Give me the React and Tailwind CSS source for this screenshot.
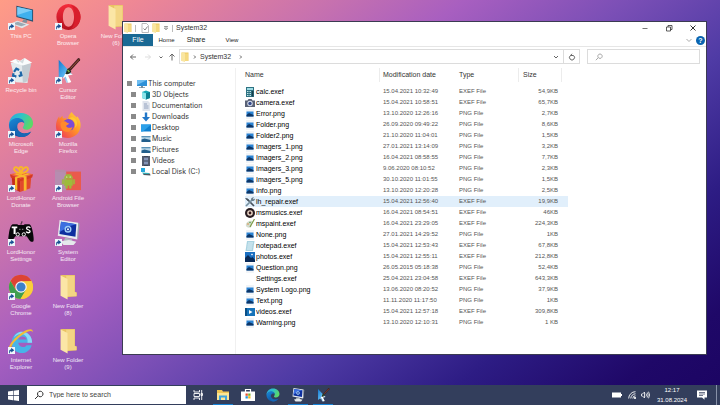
import { useState } from 'react'

/* ---------- Desktop icons (28x28 grid) ---------- */

function Folder({ className }) {
  return (
    <svg viewBox="0 0 28 28" className={className}>
      <path d="M6 1.500l1-.5h14.500v18l2 1v4l-11.500 1z" fill="#e9c363" />
      <path d="M12 2h9v17.500l2 .5v4H12z" fill="#f3d584" />
      <path d="M6 1.500l7.500 4v22L6 23.500z" fill="#fbe6a6" />
    </svg>
  )
}

function ThisPC({ className }) {
  return (
    <svg viewBox="0 0 28 28" className={className}>
      <path d="M9 2l18 4v13L9 14z" fill="#27506f" />
      <path d="M10 3.200l16 3.600v10.800L10 13.200z" fill="#3fb0ee" />
      <path d="M10 3.200l16 3.600-16 5z" fill="#7dcdf7" />
      <path d="M17 16.500l4 1-1 3-5-1z" fill="#7f8f9c" />
      <path d="M3 21l7-3 13 4-8 4z" fill="#dfe6ea" />
      <path d="M5 21.200l5.500-2 9 2.800-5 2z" fill="#9aa9b3" />
    </svg>
  )
}

function RecycleBin({ className }) {
  return (
    <svg viewBox="0 0 28 28" className={className}>
      <path d="M3 5l21 1-3 21-13-1z" fill="#e3e9ec" />
      <path d="M15 7l10-1-4 19-5 2z" fill="#c3ccd2" />
      <path d="M2 4l6-3 5 2 5-3 8 5-10 3z" fill="#fafcfc" />
      <path d="M8 1l3 4 7-5-2 6z" fill="#d4dcdf" />
      <g fill="none" stroke="#1d67a8" strokeWidth="2.400">
        <path d="M6.500 15l2.500-3.500 3 1.500" />
        <path d="M13.500 14.500l1 4-3 1" />
        <path d="M9 20l-3.500-1 .5-2.500" />
      </g>
    </svg>
  )
}

function Edge({ className }) {
  return (
    <svg viewBox="0 0 28 28" className={className}>
      <defs>
        <linearGradient id="edgeTop" x1="0" y1="0" x2="1" y2=".4">
          <stop offset="0" stopColor="#2aa4e0" />
          <stop offset=".5" stopColor="#2fc3c8" />
          <stop offset="1" stopColor="#5bd868" />
        </linearGradient>
        <linearGradient id="edgeSide" x1="0" y1="0" x2=".7" y2="1">
          <stop offset="0" stopColor="#1b8bd8" />
          <stop offset="1" stopColor="#0b4c9c" />
        </linearGradient>
      </defs>
      <path d="M1 14C1 6 7 1 14 1c8 0 13 5.500 13 11 0 4.500-3.500 7-7 7-3 0-4.500-1.200-4-2.500 1-1.500 1.500-2.500 1.500-4 0-3-3-5-7-5-5 0-8.500 2.500-9.500 6.500z" fill="url(#edgeTop)" />
      <path d="M1 14c.5-5 5-7.500 9-7.500 4.500 0 7.500 2.800 7.500 5.500-2-2-6.500-1.500-7.500 2.500-1 5 4 9.500 9.500 8.500 2-.3 4-1 5.500-2C22.500 25 18.500 27 14 27 6.500 27 1 21 1 14z" fill="url(#edgeSide)" />
      <path d="M10 14.500C8.500 20 14 24 19.500 23c2-.3 4-1 5.500-2-3 5-7.500 6.500-11.500 5.800C8 25.500 6 18.500 10 14.500z" fill="#1767b5" />
    </svg>
  )
}

function Gift({ className }) {
  return (
    <svg viewBox="0 0 28 28" className={className}>
      <path d="M4 12l9 3v13l-8-4z" fill="#c62d1c" />
      <path d="M13 15l12-3-1 12-11 4z" fill="#e2492c" />
      <path d="M2 9l12-2.500L27 9l-13.500 4.500z" fill="#f0623c" />
      <path d="M2 9l11.500 4.500v3L3 12.500zM27 9l-13.500 4.500v3L26 12.500z" fill="#d63a22" />
      <path d="M6 8.500l3-.7 11 3.500V26l-3 1V12.500zM21 7.800l3 .7-14 4.800V26l-2.500-1V12z" fill="#f8b82e" />
      <g fill="none" stroke="#f9b52a" strokeWidth="2">
        <path d="M14 8C9 7 5 4.500 7 2s6 2 7 6z" />
        <path d="M14 8c5-1 9-3.500 7-6s-6 2-7 6z" />
        <path d="M14 8c-2-4-2.500-7 0-7s2 3 0 7z" />
      </g>
    </svg>
  )
}

function Gamepad({ className }) {
  return (
    <svg viewBox="0 0 28 28" className={className}>
      <path d="M14 5c0-2 1-1.500 1-3.500" stroke="#111" strokeWidth="1" fill="none" />
      <path d="M5 4.500h5l1 1h6l1-1h5c2 1 3 4 4 10 1 7 1 9-1 9-3 0-4-4-6-6H8c-2 2-3 6-6 6-2 0-2-3-1-9 1-6 2-9 4-10z" fill="#08080a" />
      <path d="M4 7h6v2H8.200v6H6V9H4z" fill="#fff" />
      <path d="M24 8.500c-1-1.500-4-1.300-4 .4 0 2 3.800 1.200 3.800 3.300 0 2-3.300 2-4.300.3" stroke="#fff" strokeWidth="1.400" fill="none" />
      <circle cx="10.500" cy="15.500" r="1.800" stroke="#fff" fill="none" />
      <circle cx="17" cy="15.500" r="1.800" stroke="#fff" fill="none" />
      <path d="M12 10h1.500M15 10h1.500" stroke="#aaa" />
    </svg>
  )
}

function Chrome({ className }) {
  return (
    <svg viewBox="0 0 28 28" className={className}>
      <circle cx="14" cy="14" r="13" fill="#f7cb33" />
      <path d="M2.700 7.500A13 13 0 0 1 25.300 7.500L14 8l-5.600 9.200z" fill="#dd4335" />
      <path d="M2.700 7.500A13 13 0 0 0 13.500 27l6-10-11.100.2z" fill="#3f9f4f" />
      <path d="M14 8h11.500A13 13 0 0 1 13.500 27l6-10z" fill="#f9cf3b" />
      <circle cx="14" cy="14" r="6.200" fill="#f4f6f7" />
      <circle cx="14" cy="14" r="4.900" fill="#3c80c9" />
    </svg>
  )
}

function Explorer({ className }) {
  return (
    <svg viewBox="0 0 28 28" className={className}>
      <path d="M15 4c6.500 0 11 5 11 12H11c.5 5 7 6 9 2.500h5.500C24 24 19.500 27 15 27 8.500 27 4 22 4 15.500S9 4 15 4zm-4 8.500h9c-.5-4.500-8-4.500-9 0z" fill="#47b4e8" />
      <path d="M15 4c6.500 0 11 5 11 12h-5c1-6-3-9.500-7-9.500-3 0-5.500 1.500-7.500 4C7.500 6.500 11 4 15 4z" fill="#8bd8f6" />
      <path d="M1 24C-1 18 12 5 21 2c4-1.300 6-.5 5.500 2.500-1-1.800-3-1.600-6-.2C13 8 3 17 3 23z" fill="#f2bc37" />
    </svg>
  )
}

function Opera({ className }) {
  return (
    <svg viewBox="0 0 28 28" className={className}>
      <defs>
        <linearGradient id="opera" x1="0" y1="0" x2="0" y2="1">
          <stop offset="0" stopColor="#f52b3a" />
          <stop offset="1" stopColor="#b5111f" />
        </linearGradient>
      </defs>
      <path fillRule="evenodd" d="M14.500 0a13 14 0 1 0 .01 0zM14.500 3.500c3.600 0 6 4.500 6 10.500s-2.400 10.500-6 10.500-6-4.500-6-10.500 2.400-10.500 6-10.500z" fill="url(#opera)" />
      <path d="M17 1c6.500 1.500 10.500 6.500 10.500 13S23.500 25.500 17 27c3-2.500 4.500-7 4.500-13S20 3.500 17 1z" fill="#d81f2d" />
    </svg>
  )
}

function CursorEditor({ className }) {
  return (
    <svg viewBox="0 0 28 28" className={className}>
      <defs>
        <linearGradient id="cursor" x1="0" y1="0" x2="1" y2="1">
          <stop offset="0" stopColor="#1276cf" />
          <stop offset=".5" stopColor="#55b2ee" />
          <stop offset="1" stopColor="#fff" />
        </linearGradient>
      </defs>
      <path d="M4 2l15 16-6 .5 3 7-3.500 1.500-3-7L4 24z" fill="url(#cursor)" />
      <path d="M12 15l7 3-5 .8 3.500 7-3 1.200-3-7-3.500 3z" fill="#fff" />
      <path d="M25 0c1.500 0 2.500 1 2 2.500l-10 11-2.500-2z" fill="#432021" />
      <path d="M26 1.500l-9.500 10" stroke="#a55436" strokeWidth="1" />
      <path d="M14.500 11l3 3c0 3-4.500 4-6.500 3 1.500-1 1-5 3.500-6z" fill="#202b22" />
      <path d="M13.500 13l2 2" stroke="#78b341" strokeWidth="1.500" />
    </svg>
  )
}

function Firefox({ className }) {
  return (
    <svg viewBox="0 0 28 28" className={className}>
      <defs>
        <linearGradient id="fox" x1="1" y1="0" x2="0" y2="1">
          <stop offset="0" stopColor="#ffe23d" />
          <stop offset=".45" stopColor="#ff9328" />
          <stop offset="1" stopColor="#ee2763" />
        </linearGradient>
      </defs>
      <path d="M18 0c1 2.500 4 4 5.500 6l.5-1.500c3 4 4 7.500 3.500 11.500C26.500 23 21 28 14 28 6.500 28 1 22.500 1 15c0-4 1.500-8 3.500-10.500L5 7l3-3 .5 3c2-.5 4 0 5.500.8C14 4 16 2 18 0z" fill="url(#fox)" />
      <circle cx="14.500" cy="14" r="6.500" fill="#7b4bd6" />
      <path d="M6 12c2-2.500 5-2.500 7-.5l2 .5c0 1.600-2.500 1.800-3 3 .5 2 4 3 7 .8-1 4.500-4 6-7 5.500S5.500 18 6 12z" fill="#ff8a2a" />
      <path d="M15 7c5 1 8 5 6.500 10 3-2 3-7 .5-9.500s-4.500-2-7-.5z" fill="#ffc933" />
    </svg>
  )
}

function AndroidFiles({ className }) {
  return (
    <svg viewBox="0 0 28 28" className={className}>
      <path d="M0 4h10l2 2h16v20H0z" fill="#b78aa9" />
      <path d="M12 6h16v20H12z" fill="#ea5a4c" />
      <path d="M0 6l12 1v19H0z" fill="#b58fb4" opacity=".7" />
      <path d="M10 13.500a4.500 4.500 0 0 1 9 0zM10 14.500h9v6.500h-1.500v3h-2v-3h-2v3h-2v-3H10zM7.800 14.500h1.500v5H7.800zM19.700 14.500h1.500v5h-1.500zM11 8l1.500 2M18 8l-1.500 2" fill="#9dbb3b" stroke="#9dbb3b" strokeWidth=".5" />
      <circle cx="12.700" cy="11.800" r=".6" fill="#fff" />
      <circle cx="16.300" cy="11.800" r=".6" fill="#fff" />
    </svg>
  )
}

function SystemEditor({ className }) {
  return (
    <svg viewBox="0 0 28 28" className={className}>
      <path d="M5 0l20 3-1 18L3 17z" fill="#e8ecef" />
      <path d="M25 3l1.500 1L25 20l-1 1z" fill="#9ba5b0" />
      <path d="M6.500 2L23 4.500 22 18 4.800 15z" fill="#0d2f9f" />
      <path d="M6.500 2L23 4.500l-7 2L5 13z" fill="#3d6fe0" />
      <circle cx="14" cy="10" r="3" fill="none" stroke="#9fcdf5" strokeWidth="1.600" />
      <circle cx="14" cy="10" r="1.200" fill="#e9f5fd" />
      <path d="M11 19l7 1.500 1 3H9z" fill="#aeb6be" />
      <path d="M6 23l9-1.500 8 2-3 3.500H9z" fill="#e5e9ec" />
    </svg>
  )
}

function Shortcut() {
  return (
    <svg viewBox="0 0 7 7" className="absolute bottom-0 left-0 size-[7px]">
      <path d="M0 0h7v7H0z" fill="#eef5fb" />
      <path d="M1.200 6.200V4.200C1.200 3 2 2.400 3.200 2.400V.8L6.300 3.200 3.200 5.500V4c-1 0-1.200.8-1.200 2.200z" fill="#174f92" />
    </svg>
  )
}

/* ---------- Small icons (10x10 grid) ---------- */

function PngIcon() {
  return (
    <svg viewBox="0 0 10 10" className="size-[10px]">
      <path d="M1 0h8v10H1z" fill="#f1f4f7" />
      <path d="M1.500 2.500h7v5h-7z" fill="#2a83d3" />
      <path d="M1.500 7.500V6l2.500-2 4.500 2v1.500z" fill="#0c3566" />
    </svg>
  )
}

const SMALL = {
  calc: (
    <>
      <path d="M1 0h8v10H1z" fill="#2e7282" />
      <path d="M2 1h6v2H2z" fill="#9edbe4" />
      <path d="M2 4.500h4M2 6.500h4M2 8.500h4" stroke="#c2e4e8" strokeDasharray="1 .5" />
      <path d="M6.800 4h1.500v5.500H6.800z" fill="#193f4a" />
    </>
  ),
  camera: (
    <>
      <path d="M0 2.500h2.500L3.500 1h3l1 1.500H10V9H0z" fill="#5a6276" />
      <circle cx="5" cy="5.500" r="2.700" fill="#d7dfef" />
      <circle cx="5" cy="5.500" r="1.700" fill="#374b8a" />
    </>
  ),
  repair: (
    <>
      <path d="M2 2l7 7" stroke="#47525c" strokeWidth="1.700" />
      <path d="M0 1l2 .2L4 3 3 4 1.200 2.500z" fill="#47525c" />
      <path d="M8 2L1 9" stroke="#77909f" strokeWidth="1.700" />
      <path d="M6 2.500C6 1 7.500 0 9 .3L8 1.500l.7.900L10 1.500c.3 1.500-1.500 3-3 2.500z" fill="#687d8b" />
    </>
  ),
  music: (
    <>
      <circle cx="5" cy="5" r="5" fill="#291e22" />
      <circle cx="5" cy="5" r="2.800" fill="#f0dccb" />
      <circle cx="5" cy="5" r="1.400" fill="#34191c" />
    </>
  ),
  paint: (
    <>
      <path d="M1 7c-1-3 3-6 6-5 2 1 1 2 0 3s0 2-1 3-4 1-5-1z" fill="#d4dccf" />
      <circle cx="3" cy="5" r=".8" fill="#d98c3b" />
      <circle cx="5" cy="3.500" r=".8" fill="#58a24d" />
      <path d="M9.500 0L5 8" stroke="#7d9c46" strokeWidth="1.200" />
    </>
  ),
  notepad: (
    <>
      <path d="M2 0h7.500L8 10H.5z" fill="#a9d3e1" />
      <path d="M3 2h5M2.500 4h5M2.300 6h5M2 8h5" stroke="#edf8fb" strokeWidth=".8" />
    </>
  ),
  photos: (
    <>
      <path d="M0 0h10v10H0z" fill="#1b6fc1" />
      <path d="M0 10V6l3-3 3 3 1.500-1L10 8v2z" fill="#092a57" />
      <path d="M7 1.500l1 1-1 1-1-1z" fill="#fff" />
    </>
  ),
  videos: (
    <>
      <path d="M0 1h10v8H0z" fill="#1673b9" />
      <path d="M0 1h2v8H0z" fill="#0b4f87" />
      <path d="M4 3l3.500 2L4 7z" fill="#fff" />
    </>
  ),
  computer: (
    <>
      <path d="M0 1h10v6H0z" fill="#2f91d8" />
      <path d="M0 1h10L0 6z" fill="#6fbdf0" />
      <path d="M4 7h2v1.200h2V9H2v-.8h2z" fill="#778f9f" />
    </>
  ),
  objects: (
    <>
      <path d="M1 2l4-1.500L9 2v6L5 9.500 1 8z" fill="#16a7b5" />
      <path d="M1 2l4 1.200v6.300L1 8z" fill="#8ae4ea" />
      <path d="M5 3.200L9 2v6L5 9.500z" fill="#0d7f91" />
    </>
  ),
  docs: (
    <>
      <path d="M1.500 0h5.500l2 2v8H1.500z" fill="#dfe4ed" />
      <path d="M3 3h3M3 5h4.500M3 7h4.500" stroke="#8293b4" strokeWidth=".8" />
    </>
  ),
  downloads: <path d="M3.800.5h2.400v4.500H9L5 9.500 1 5h2.800z" fill="#2277c8" />,
  desktop: (
    <>
      <path d="M0 1.500h10v7H0z" fill="#1080d0" />
      <path d="M0 1.500h10L2 8.500H0z" fill="#2ca1ea" />
    </>
  ),
  picture: (
    <>
      <path d="M.5 2h9v6h-9z" fill="#b9d7e8" />
      <path d="M.5 2h9v1.300h-9z" fill="#5b93b7" />
      <path d="M.5 8V5.500l3-1 6 1.500v2z" fill="#235f8b" />
    </>
  ),
  film: (
    <>
      <path d="M1 0h8v10H1z" fill="#3d4457" />
      <path d="M3 1.500h4v3H3zM3 5.500h4v3H3z" fill="#8493b5" />
      <path d="M2 .5v9M8 .5v9" stroke="#c7cbd6" strokeWidth=".7" strokeDasharray="1 1" />
    </>
  ),
  disk: (
    <>
      <path d="M0 1h4v4H0z" fill="#26a7dc" />
      <path d="M2 6l7 .5.5 2-7-.5z" fill="#4a5961" />
      <path d="M1 5.500l7 .5v1L2 6.800z" fill="#2fb5bf" />
    </>
  ),
}

function SmallIcon({ name }) {
  if (name === 'none') return <span className="block size-[10px]" />
  if (name === 'png') return <PngIcon />
  return <svg viewBox="0 0 10 10" className="size-[10px]">{SMALL[name]}</svg>
}

function TinyFolder() {
  return (
    <svg viewBox="0 0 8 10" className="h-[10px] w-2 shrink-0">
      <path d="M.5.5h7v8.500h-7z" fill="#eec95e" />
      <path d="M.5.5l3.500.8V10L.5 9z" fill="#fae6a0" />
      <path d="M4 1.500h3V9H4z" fill="#f5d980" />
    </svg>
  )
}

function Line({ d, className = 'size-2', width = 1 }) {
  return (
    <svg viewBox="0 0 8 8" className={className} fill="none" stroke="currentColor" strokeWidth={width}>
      <path d={d} />
    </svg>
  )
}

/* ---------- Data ---------- */

const DESKTOP = [
  { icon: ThisPC, label: ['This PC'] },
  { icon: RecycleBin, label: ['Recycle bin'] },
  { icon: Edge, label: ['Microsoft', 'Edge'] },
  { icon: Gift, label: ['LordHonor', 'Donate'] },
  { icon: Gamepad, label: ['LordHonor', 'Settings'] },
  { icon: Chrome, label: ['Google', 'Chrome'] },
  { icon: Explorer, label: ['Internet', 'Explorer'] },
  { icon: Opera, label: ['Opera', 'Browser'] },
  { icon: CursorEditor, label: ['Cursor', 'Editor'] },
  { icon: Firefox, label: ['Mozilla', 'Firefox'] },
  { icon: AndroidFiles, label: ['Android File', 'Browser'] },
  { icon: SystemEditor, label: ['System', 'Editor'] },
  { icon: Folder, label: ['New Folder', '(8)'], folder: true },
  { icon: Folder, label: ['New Folder', '(9)'], folder: true },
  { icon: Folder, label: ['New Folder', '(6)'], folder: true },
]

const TREE = [
  ['objects', '3D Objects'],
  ['docs', 'Documentation'],
  ['downloads', 'Downloads'],
  ['desktop', 'Desktop'],
  ['picture', 'Music'],
  ['picture', 'Pictures'],
  ['film', 'Videos'],
  ['disk', 'Local Disk (C:)'],
]

const FILES = [
  ['calc', 'calc.exef', '15.04.2021 10:32:49', '54,9KB'],
  ['camera', 'camera.exef', '15.04.2021 10:58:51', '65,7KB'],
  ['png', 'Error.png', '13.10.2020 12:26:16', '2,7KB'],
  ['png', 'Folder.png', '26.09.2020 09:49:22', '8,6KB'],
  ['png', 'Folder2.png', '21.10.2020 11:04:01', '1,5KB'],
  ['png', 'Imagers_1.png', '27.01.2021 13:14:09', '3,2KB'],
  ['png', 'Imagers_2.png', '16.04.2021 08:58:55', '7,7KB'],
  ['png', 'Imagers_3.png', '9.06.2020 08:10:52', '2,3KB'],
  ['png', 'Imagers_5.png', '30.10.2020 11:01:55', '1,5KB'],
  ['png', 'Info.png', '13.10.2020 12:20:28', '2,5KB'],
  ['repair', 'lh_repair.exef', '15.04.2021 12:56:40', '19,9KB'],
  ['music', 'msmusics.exef', '16.04.2021 08:54:51', '46KB'],
  ['paint', 'mspaint.exef', '16.04.2021 23:29:05', '224,3KB'],
  ['png', 'None.png', '27.01.2021 14:29:52', '1KB'],
  ['notepad', 'notepad.exef', '15.04.2021 12:53:43', '67,8KB'],
  ['photos', 'photos.exef', '15.04.2021 12:55:11', '212,8KB'],
  ['png', 'Question.png', '26.05.2015 05:18:38', '52,4KB'],
  ['none', 'Settings.exef', '25.04.2021 23:04:58', '643,3KB'],
  ['png', 'System Logo.png', '13.06.2020 08:20:52', '37,9KB'],
  ['png', 'Text.png', '11.11.2020 11:17:50', '1KB'],
  ['videos', 'videos.exef', '15.04.2021 12:57:18', '309,8KB'],
  ['png', 'Warning.png', '13.10.2020 12:10:31', '1 KB'],
]

/* ---------- Explorer window ---------- */

function TitleBar() {
  return (
    <div className="flex h-3 items-center text-[#333]">
      <div className="flex flex-1 items-center gap-[3px] pl-px">
        <TinyFolder />
        <span className="mr-0.5 h-[7px] w-px bg-[#bbb]" />
        <button aria-label="Properties">
          <svg viewBox="0 0 8 10" className="h-[10px] w-2">
            <path d="M1 .5h4.500l2 2v7H1z" fill="#fff" stroke="#aaa" strokeWidth=".8" />
            <path d="M2.500 5.500L4 7 6.500 3.500" fill="none" stroke="#888" />
          </svg>
        </button>
        <button aria-label="New folder"><TinyFolder /></button>
        <button aria-label="Customize toolbar" className="text-[#777]">
          <Line d="M1.500 2h5M1.800 4h4.400L4 6.500z" className="size-1.5" />
        </button>
        <span className="h-[7px] w-px bg-[#bbb]" />
        <span className="text-[7px] leading-3">System32</span>
      </div>
      <div className="flex items-center gap-4 pr-[9px] text-[#333]">
        <button aria-label="Minimize" className="text-[#777]"><Line d="M1.500 4.500h5" /></button>
        <button aria-label="Restore"><Line d="M1.500 3h4v4h-4zM3 3V1.500h4v4H5.500" width=".8" /></button>
        <button aria-label="Close"><Line d="M1.500 1.500l5 5M6.500 1.500l-5 5" /></button>
      </div>
    </div>
  )
}

function Ribbon() {
  return (
    <div className="flex h-[13px] items-center border-b border-[#e6e6e6] text-[#222]">
      <button className="h-3 w-[30px] bg-[#1a6994] text-[7px] leading-3 text-white">File</button>
      <button className="w-[27px] text-[6px]">Home</button>
      <button className="w-8 text-[7px]">Share</button>
      <button className="w-10 text-[6px]">View</button>
      <div className="ml-auto flex items-center gap-[3px] pr-px">
        <button aria-label="Expand ribbon" className="text-[#aaa]"><Line d="M1.500 3L4 5.500 6.500 3" /></button>
        <button aria-label="Help" className="size-[9px] rounded-full bg-[#0a64b0] text-[7px] leading-[9px] font-bold text-white">?</button>
      </div>
    </div>
  )
}

function AddressRow() {
  return (
    <div className="flex items-center pt-0.5 pr-[6px] pl-[6px] text-[#666]">
      <div className="flex w-[50px] shrink-0 items-center">
        <button aria-label="Back"><Line d="M7 4H1.500M4 1.500L1.500 4 4 6.500" /></button>
        <button aria-label="Forward" className="ml-[7px] text-[#ddd]"><Line d="M1 4h5.500M4 1.500L6.500 4 4 6.500" /></button>
        <button aria-label="Recent" className="ml-[5px]"><Line d="M2.500 3.500L4 5l1.500-1.500" /></button>
        <button aria-label="Up" className="ml-[3px]"><Line d="M4 7.500V1M1.500 3.500L4 1l2.500 2.500" /></button>
      </div>
      <div className="flex h-[15px] flex-1 items-center border border-[#dcdcdc]">
        <span className="ml-px"><TinyFolder /></span>
        <Line d="M3 2.500L4.500 4 3 5.500" className="ml-0.5 size-2" />
        <span className="ml-px text-[7px] leading-3 text-[#333]">System32</span>
        <Line d="M3 2.500L4.500 4 3 5.500" className="ml-1.5 size-2" />
        <button aria-label="Address history" className="mr-[3px] ml-auto"><Line d="M2 3l2 2 2-2" /></button>
        <button aria-label="Refresh" className="flex h-full w-4 items-center justify-center border-l border-[#dcdcdc]">
          <Line d="M2.500 2.500a2.500 2.500 0 1 0 3 0M5.500 2.500h-3L4 .8" />
        </button>
      </div>
      <label className="ml-[7px] flex h-[15px] w-[113px] items-center border border-[#dcdcdc] pl-[7px]">
        <Line d="M3.500 4.500L.8 7.200M5 1a2.200 2.200 0 1 0 .01 0" className="size-2 text-[#aaa]" />
        <input type="search" aria-label="Search System32" className="min-w-0 flex-1 text-[7px] outline-none" />
      </label>
    </div>
  )
}

function Tree() {
  return (
    <nav className="w-[113px] shrink-0 border-r border-[#f0f0f0] pt-[10px] font-['Inter','Liberation_Sans',sans-serif] text-[7px] leading-[11px] text-[#333]">
      <button className="flex h-[11px] items-center gap-px pl-1">
        <span className="mr-1 size-[5px] bg-[#8a8a8a]" />
        <SmallIcon name="computer" />
        This computer
      </button>
      <ul>
        {TREE.map(([icon, label]) => (
          <li key={label}>
            <button className="flex h-[11px] items-center gap-px pl-2">
              <span className="mr-1 size-[5px] bg-[#8a8a8a]" />
              <SmallIcon name={icon} />
              {label}
            </button>
          </li>
        ))}
      </ul>
    </nav>
  )
}

function FileTable() {
  const [selected, setSelected] = useState('lh_repair.exef')

  return (
    <table className="w-[323px] table-fixed self-start text-left">
      <colgroup>
        <col className="w-[135px]" />
        <col className="w-[79px]" />
        <col className="w-[60px]" />
        <col className="w-[43px]" />
        <col className="w-[6px]" />
      </colgroup>
      <thead className="text-[7px] leading-[14px] text-[#333]">
        <tr className="h-[18px] align-top">
          <th className="p-0 font-normal"><div className="border-r border-[#ececec]">Name</div></th>
          <th className="p-0 font-normal"><div className="pl-[3px] whitespace-nowrap">Modification date</div></th>
          <th className="p-0 font-normal"><div className="border-r border-[#ececec]">Type</div></th>
          <th className="p-0 font-normal"><div className="border-r border-[#ececec] pl-1">Size</div></th>
          <td />
        </tr>
      </thead>
      <tbody className="text-[6px] leading-[11px] text-[#555]">
        {FILES.map(([icon, name, date, size]) => (
          <tr
            key={name}
            onClick={() => setSelected(name)}
            className={selected === name ? 'bg-[#e1effb]' : ''}
          >
            <td className="p-0">
              <div className="flex h-[11px] items-center gap-px text-[7px] text-black">
                <SmallIcon name={icon} />
                {name}
              </div>
            </td>
            <td className="p-0 pl-[3px] whitespace-nowrap">{date}</td>
            <td className="p-0">{name.endsWith('.png') ? 'PNG File' : 'EXEF File'}</td>
            <td className="p-0 pr-1 text-right">{size}</td>
            <td />
          </tr>
        ))}
      </tbody>
    </table>
  )
}

function ExplorerWindow() {
  return (
    <section className="absolute top-[21px] right-[13px] bottom-[30px] left-[122px] flex flex-col overflow-hidden border border-[#3b3b52] bg-white">
      <TitleBar />
      <Ribbon />
      <AddressRow />
      <div className="flex flex-1 pt-1">
        <Tree />
        <div className="pl-[9px]">
          <FileTable />
        </div>
      </div>
    </section>
  )
}

/* ---------- Taskbar ---------- */

function TaskButton({ label, open, children }) {
  return (
    <button
      aria-label={label}
      className={`flex h-full w-5 items-center justify-center border-b ${open ? 'border-[#1583d8]' : 'border-transparent'}`}
    >
      {children}
    </button>
  )
}

function Taskbar() {
  return (
    <footer className="flex h-5 shrink-0 items-center bg-[#333e5c] text-white">
      <button aria-label="Start" className="flex h-full w-[27px] items-center justify-center">
        <svg viewBox="0 0 11 11" className="size-[11px]" fill="#fff">
          <path d="M0 1.500L5 .8v4.500H0zM5.600.7L11 0v5.300H5.600zM0 5.900h5v4.400l-5-.7zM5.600 5.900H11V11l-5.400-.7z" />
        </svg>
      </button>
      <label className="flex h-[18px] w-[159px] items-center gap-[5px] bg-white pl-[7px] text-[#333]">
        <Line d="M3.500 4.500L.8 7.200M5 1a2.200 2.200 0 1 0 .01 0" className="size-[10px]" width=".8" />
        <input type="text" placeholder="Type here to search" aria-label="Type here to search" className="min-w-0 flex-1 text-[7px] leading-3 outline-none placeholder:text-[#444]" />
      </label>
      <div className="flex h-full gap-[5px] pl-[2px]">
        <TaskButton label="Task view">
          <svg viewBox="0 0 10 10" className="size-[10px]" fill="none" stroke="#fff" strokeWidth=".9">
            <path d="M1 0v2h5.500V0M1 10V8h5.500v2M1 3.500h5.500v3H1zM8.700 0v10M8 3.500h1.500v2H8z" />
          </svg>
        </TaskButton>
        <TaskButton label="File Explorer" open>
          <svg viewBox="0 0 14 12" className="h-3 w-[14px]">
            <path d="M1 1h5l1 1.500h6V11H1z" fill="#f0c554" />
            <path d="M1 4h12v7H1z" fill="#fbe594" />
            <path d="M3 6.500h8V11H9V8.500H5V11H3z" fill="#3fa3dc" />
          </svg>
        </TaskButton>
        <TaskButton label="Store">
          <svg viewBox="0 0 14 14" className="size-[14px]">
            <path d="M4.500 4V1.500h5V4" fill="none" stroke="#fff" strokeWidth="1.200" />
            <path d="M0 3.500h14V13H0z" fill="#fff" />
            <path d="M4.500 5.500h2.300v2.300H4.500z" fill="#e8502c" />
            <path d="M7.200 5.500h2.300v2.300H7.200z" fill="#75b52b" />
            <path d="M4.500 8.200h2.300v2.300H4.500z" fill="#2395dd" />
            <path d="M7.200 8.200h2.300v2.300H7.200z" fill="#f5b81c" />
          </svg>
        </TaskButton>
        <TaskButton label="Microsoft Edge"><Edge className="size-[14px]" /></TaskButton>
        <TaskButton label="System Editor" open><SystemEditor className="size-[14px]" /></TaskButton>
        <TaskButton label="Cursor Editor" open><CursorEditor className="size-[14px]" /></TaskButton>
      </div>
      <div className="ml-auto flex h-full items-center">
        <svg viewBox="0 0 10 6" className="h-1.5 w-[10px]">
          <path d="M0 .5h9v5H0zM9 2h1v2H9z" fill="#fff" />
        </svg>
        <svg viewBox="0 0 8 8" className="ml-1.5 size-2" fill="none" stroke="#fff" strokeWidth=".9">
          <path d="M.7 7.500A6.800 6.800 0 0 1 7.500.7M2.800 7.500A4.700 4.700 0 0 1 7.500 2.800M4.800 7.500A2.700 2.700 0 0 1 7.500 4.800" />
          <path d="M6.400 6.400h1.200v1.200H6.400z" fill="#fff" />
        </svg>
        <svg viewBox="0 0 9 8" className="ml-[5px] h-2 w-[9px]" fill="none" stroke="#fff" strokeWidth=".8">
          <path d="M.5 3h1L3.500 1v6l-2-2h-1zM5 2.500q1 1.500 0 3M6.300 1.500q1.800 2.500 0 5M7.500.700q2.300 3.300 0 6.600" />
        </svg>
        <time className="ml-[5px] w-[34px] text-center text-[6px] leading-[10px]">
          12:17
          <br />
          31.08.2024
        </time>
        <button aria-label="Notifications" className="ml-2">
          <svg viewBox="0 0 10 10" className="size-[10px]">
            <path d="M0 .5h10v7H7.500v2.300L5 7.500H0z" fill="#fff" />
            <path d="M2 2.500h6M2 4h6M2 5.500h4" stroke="#333e5c" strokeWidth=".7" />
          </svg>
        </button>
        <button aria-label="Show desktop" className="ml-[9px] h-full w-1 border-l border-[#8791a8]" />
      </div>
    </footer>
  )
}

/* ---------- Desktop ---------- */

export default function App() {
  return (
    <div className="flex h-screen flex-col overflow-hidden bg-[linear-gradient(143deg,#ff9c86_0%,#ee8795_11%,#c872ae_26%,#a85fc0_37%,#7b4fb6_50%,#4f3ba5_63%,#2d1c84_77%,#1f0868_90%,#1b0462_100%)] font-['Liberation_Sans',Arial,sans-serif]">
      <main className="relative flex-1">
        <div className="grid grid-flow-col grid-cols-[42px_52px_44px] grid-rows-[repeat(7,54px)] pt-1">
          {DESKTOP.map(({ icon: Icon, label, folder }) => (
            <button key={label.join(' ')} className="flex flex-col items-center">
              <span className="relative">
                <Icon className="size-[26px]" />
                {!folder && <Shortcut />}
              </span>
              <span className="mt-[3px] text-[6px] leading-[7px] whitespace-nowrap text-white/85">
                {label.map(line => (
                  <span key={line} className="block">{line}</span>
                ))}
              </span>
            </button>
          ))}
        </div>
        <ExplorerWindow />
      </main>
      <Taskbar />
    </div>
  )
}
